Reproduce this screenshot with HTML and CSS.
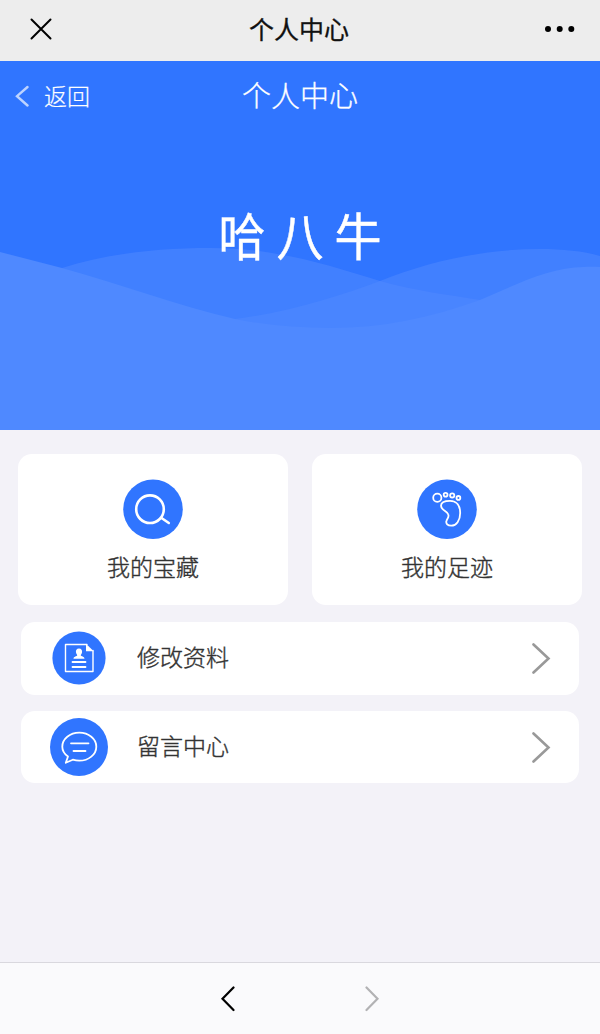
FILE: index.html
```html
<!DOCTYPE html>
<html lang="zh-CN">
<head>
    <meta charset="UTF-8">
    <meta name="viewport" content="width=device-width, initial-scale=1.0">
    <title>个人中心</title>
    <link rel="stylesheet" href="styles.css">
</head>
<body>
    <div class="topbar">
        <svg class="close" width="24" height="24" viewBox="0 0 24 24"><path d="M2.500 2.500L21.500 21.500M21.500 2.500L2.500 21.500"/></svg>
        <h1>个人中心</h1>
        <svg class="more" width="32" height="8" viewBox="0 0 32 8"><circle cx="4" cy="4" r="3"/><circle cx="15.700" cy="4" r="3"/><circle cx="27.300" cy="4" r="3"/></svg>
    </div>

    <div class="hero">
        <svg class="waves" width="600" height="200" viewBox="0 0 600 200">
            <path class="wave-back" d="M0 65C20 60 40 45 62 38C110 23 160 18 210 18C275 18 325 34 380 51C415 61 450 65 480 70L480 200H0Z"/>
            <path class="wave-back" d="M235 89C290 82 340 66 380 51C430 31 485 19 540 19C562 19 583 21 600 26V200H235Z"/>
            <path class="wave-front" d="M0 22L62 38C120 54 176 75 235 89C265 95 298 98 330 98C382 98 430 88 480 70C515 55 550 37 584 37C590 36.500 595 37 600 37V200H0Z"/>
        </svg>
        <div class="hero-nav">
            <a class="back" href="#">
                <svg width="14" height="22" viewBox="0 0 14 22"><path d="M12.500 2L2 11.200L12.500 20.500"/></svg>
                <span>返回</span>
            </a>
            <h2>个人中心</h2>
        </div>
        <div class="logo">哈八牛</div>
    </div>

    <div class="content">
        <div class="cards">
            <a class="card" href="#">
                <svg width="60" height="60" viewBox="0 0 60 60">
                    <circle class="disc" cx="30" cy="30.200" r="29.800"/>
                    <circle class="line thick" cx="27" cy="30.200" r="13.800"/>
                    <path class="line thick" d="M38.500 39L45.800 44"/>
                </svg>
                <span>我的宝藏</span>
            </a>
            <a class="card" href="#">
                <svg width="60" height="60" viewBox="0 0 60 60">
                    <circle class="disc" cx="30" cy="30.200" r="29.800"/>
                    <circle class="line" cx="20.300" cy="18.800" r="4.100"/>
                    <circle class="line" cx="28.600" cy="15.800" r="1.900"/>
                    <circle class="line" cx="35.200" cy="16.400" r="2.100"/>
                    <circle class="line" cx="41.400" cy="18.900" r="1.900"/>
                    <path class="line" d="M24 26.800C24 23.300 28.500 21.800 33 21.800C40 21.800 43.200 27 43.200 34C43.200 41.500 39.300 46.700 34.300 46.700C30.500 46.700 28.700 44.500 29.400 42C30 39.500 32.300 38.500 31.300 35.500C30.200 31.500 24 31.500 24 26.800Z"/>
                </svg>
                <span>我的足迹</span>
            </a>
        </div>

        <a class="row" href="#">
            <span class="row-icon">
                <svg width="54" height="54" viewBox="0 0 54 54">
                    <circle class="disc" cx="27" cy="27" r="26.600"/>
                    <path class="line thin" d="M35 13.500H13.500V40.500H41V19.500"/>
                    <path class="fill" d="M34 12.800L41.700 20.300H34Z"/>
                    <path class="fill" d="M27 17.500C29.300 17.500 30.500 19.200 30 21.500C29.700 23 28.800 23.500 28.800 24.500C29 25.500 32.500 25.300 32.500 27.800H21.500C21.500 25.300 25 25.500 25.200 24.500C25.200 23.500 24.300 23 24 21.500C23.500 19.200 24.700 17.500 27 17.500Z"/>
                    <path class="line" d="M20.500 31H33.500M20.500 36H33.500"/>
                </svg>
            </span>
            <span class="row-text">修改资料</span>
            <svg class="arrow" width="20" height="32" viewBox="0 0 20 32"><path d="M2.500 2.500L17.500 16.500L2.500 30.500"/></svg>
        </a>
        <a class="row" href="#">
            <span class="row-icon">
                <svg width="58" height="58" viewBox="0 0 58 58">
                    <circle class="disc" cx="29" cy="29" r="29"/>
                    <path class="line" d="M18 38.500C14.500 36 12.300 32.500 12.300 28.700C12.300 20.900 19.900 14.700 29.300 14.700C38.700 14.700 46.300 20.900 46.300 28.700C46.300 36.500 38.700 42.700 29.300 42.700C27 42.700 24.800 42.300 22.800 41.700L15.800 44.800Z"/>
                    <path class="line" d="M21 25.300H38.500M23.500 33H35.500"/>
                </svg>
            </span>
            <span class="row-text">留言中心</span>
            <svg class="arrow" width="20" height="32" viewBox="0 0 20 32"><path d="M2.500 2.500L17.500 16.500L2.500 30.500"/></svg>
        </a>
    </div>

    <div class="bottombar">
        <svg class="prev" width="16" height="26" viewBox="0 0 16 26"><path d="M13.500 1.500L2.500 12.800L13.500 24"/></svg>
        <svg class="next" width="16" height="26" viewBox="0 0 16 26"><path d="M2.500 1.500L13.500 12.800L2.500 24"/></svg>
    </div>
</body>
</html>
```
FILE: styles.css
```css
* {
    box-sizing: border-box;
}
body {
    font-family: "Noto Sans CJK SC", sans-serif;
    margin: 0;
    height: 1034px;
    display: flex;
    flex-direction: column;
    background-color: #f3f2f8;
    color: #333;
}
a {
    color: inherit;
    text-decoration: none;
}
svg {
    display: block;
    fill: none;
    stroke-linecap: round;
}
h1, h2 {
    margin: 0;
}

/* top bar */
.topbar {
    height: 61px;
    padding: 0 24px 4px 29px;
    display: grid;
    grid-template-columns: 216px 1fr 223px;
    align-items: center;
    background-color: #ededed;
}
.topbar h1 {
    padding-bottom: 1px;
    text-align: center;
    font-size: 25px;
    font-weight: 400;
    line-height: 36px;
    color: #111;
    -webkit-text-stroke: 0.3px #111;
}
.close {
    stroke: #000;
    stroke-width: 2;
}
.more {
    fill: #000;
    justify-self: end;
}

/* blue header */
.hero {
    position: relative;
    height: 369px;
    background-color: #3075ff;
    color: #fff;
}
.waves {
    position: absolute;
    left: 0;
    bottom: 0;
}
.wave-back {
    fill: #5088ff;
    fill-opacity: 0.55;
}
.wave-front {
    fill: #4f89ff;
}
.hero-nav {
    position: relative;
    height: 70px;
    padding: 0 15px;
    display: grid;
    grid-template-columns: 1fr auto 1fr;
    align-items: center;
}
.hero-nav h2 {
    padding-bottom: 4px;
    font-size: 29px;
    font-weight: 300;
    line-height: 40px;
    -webkit-text-stroke: 0.3px #fff;
}
.back {
    display: flex;
    align-items: center;
    gap: 15px;
    font-size: 23px;
    font-weight: 300;
    line-height: 34px;
    -webkit-text-stroke: 0.2px #fff;
}
.back span {
    padding-bottom: 2px;
}
.back svg {
    stroke: #bdd3ff;
    stroke-width: 2.4;
}
.logo {
    position: relative;
    margin-top: 68px;
    padding-left: 11px;
    text-align: center;
    font-size: 47px;
    line-height: 70px;
    letter-spacing: 11px;
    transform: scaleY(1.1);
    -webkit-text-stroke: 0.4px #fff;
}

/* menu */
.content {
    flex: 1;
    padding: 24px 18px 0;
}
.cards {
    display: flex;
    gap: 24px;
    margin-bottom: 17px;
}
.card {
    flex: 1;
    height: 151px;
    padding-top: 25px;
    display: flex;
    flex-direction: column;
    align-items: center;
    background-color: #fff;
    border-radius: 14px;
}
.card span,
.row-text {
    font-size: 23px;
    font-weight: 300;
    line-height: 34px;
    -webkit-text-stroke: 0.4px #333;
}
.card span {
    margin-top: 10px;
}
.disc {
    fill: #3075ff;
}
.line {
    stroke: #fff;
    stroke-width: 1.8;
    stroke-linejoin: round;
}
.thin {
    stroke-width: 1.4;
}
.thick {
    stroke-width: 2.6;
}
.fill {
    fill: #fff;
}
.row {
    height: 72.5px;
    margin: 0 3px 16px;
    padding: 0 28px;
    display: flex;
    align-items: center;
    background-color: #fff;
    border-radius: 14px;
}
.row-icon {
    width: 60px;
    display: flex;
    justify-content: center;
}
.row-text {
    flex: 1;
    margin-left: 28px;
    padding-bottom: 4px;
}
.arrow {
    stroke: #999;
    stroke-width: 2.6;
}

/* browser bar */
.bottombar {
    height: 72px;
    display: flex;
    justify-content: center;
    align-items: center;
    gap: 128px;
    border-top: 1px solid #d9d8de;
    background-color: #fafafc;
}
.prev {
    stroke: #000;
    stroke-width: 2.2;
}
.next {
    stroke: #b2b2b4;
    stroke-width: 2.2;
}
```
